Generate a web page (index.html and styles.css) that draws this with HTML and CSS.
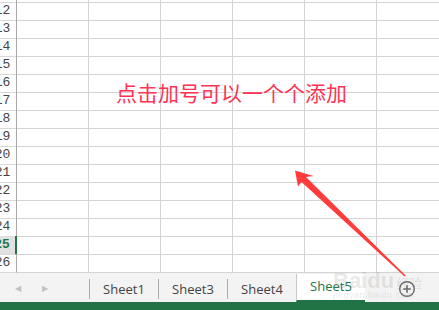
FILE: index.html
```html
<!DOCTYPE html>
<html>
<head>
    <meta charset="utf-8">
    <title>Sheet</title>
    <link rel="stylesheet" href="styles.css">
</head>
<body>
<div class="page">
    <div class="sheet">
        <div class="row"><div class="hdr">11</div><div class="cell"></div><div class="cell"></div><div class="cell"></div><div class="cell"></div><div class="cell"></div><div class="cell"></div></div>
        <div class="row"><div class="hdr">12</div><div class="cell"></div><div class="cell"></div><div class="cell"></div><div class="cell"></div><div class="cell"></div><div class="cell"></div></div>
        <div class="row"><div class="hdr">13</div><div class="cell"></div><div class="cell"></div><div class="cell"></div><div class="cell"></div><div class="cell"></div><div class="cell"></div></div>
        <div class="row"><div class="hdr">14</div><div class="cell"></div><div class="cell"></div><div class="cell"></div><div class="cell"></div><div class="cell"></div><div class="cell"></div></div>
        <div class="row"><div class="hdr">15</div><div class="cell"></div><div class="cell"></div><div class="cell"></div><div class="cell"></div><div class="cell"></div><div class="cell"></div></div>
        <div class="row"><div class="hdr">16</div><div class="cell"></div><div class="cell"></div><div class="cell"></div><div class="cell"></div><div class="cell"></div><div class="cell"></div></div>
        <div class="row"><div class="hdr">17</div><div class="cell"></div><div class="cell"></div><div class="cell"></div><div class="cell"></div><div class="cell"></div><div class="cell"></div></div>
        <div class="row"><div class="hdr">18</div><div class="cell"></div><div class="cell"></div><div class="cell"></div><div class="cell"></div><div class="cell"></div><div class="cell"></div></div>
        <div class="row"><div class="hdr">19</div><div class="cell"></div><div class="cell"></div><div class="cell"></div><div class="cell"></div><div class="cell"></div><div class="cell"></div></div>
        <div class="row"><div class="hdr">20</div><div class="cell"></div><div class="cell"></div><div class="cell"></div><div class="cell"></div><div class="cell"></div><div class="cell"></div></div>
        <div class="row"><div class="hdr">21</div><div class="cell"></div><div class="cell"></div><div class="cell"></div><div class="cell"></div><div class="cell"></div><div class="cell"></div></div>
        <div class="row"><div class="hdr">22</div><div class="cell"></div><div class="cell"></div><div class="cell"></div><div class="cell"></div><div class="cell"></div><div class="cell"></div></div>
        <div class="row"><div class="hdr">23</div><div class="cell"></div><div class="cell"></div><div class="cell"></div><div class="cell"></div><div class="cell"></div><div class="cell"></div></div>
        <div class="row"><div class="hdr">24</div><div class="cell"></div><div class="cell"></div><div class="cell"></div><div class="cell"></div><div class="cell"></div><div class="cell"></div></div>
        <div class="row"><div class="hdr hdr-active">25</div><div class="cell"></div><div class="cell"></div><div class="cell"></div><div class="cell"></div><div class="cell"></div><div class="cell"></div></div>
        <div class="row"><div class="hdr">26</div><div class="cell"></div><div class="cell"></div><div class="cell"></div><div class="cell"></div><div class="cell"></div><div class="cell"></div></div>
    </div>

    <div class="tabbar">
        <div class="nav">
            <span class="nav-arrow">&#9664;</span>
            <span class="nav-arrow">&#9654;</span>
        </div>
        <div class="tab">Sheet1</div>
        <div class="tab">Sheet3</div>
        <div class="tab">Sheet4</div>
        <div class="tab tab-active">Sheet5</div>
        <div class="add-sheet">
            <svg width="18" height="18" viewBox="0 0 18 18">
                <circle cx="9" cy="9" r="7.3" fill="none" stroke="#6a6a6a" stroke-width="1.4"/>
                <path d="M9 5.2V12.8M5.2 9H12.8" stroke="#6a6a6a" stroke-width="1.6"/>
            </svg>
        </div>
    </div>

    <div class="statusbar">就绪</div>

    <div class="note">点击加号可以一个个添加</div>

    <svg class="arrow" width="439" height="310" viewBox="0 0 439 310">
        <polygon points="295,170.5 298,186.5 301.5,182 404.6,276.6 405.6,275.6 306,177 313.5,176" fill="#ff3b3b"/>
    </svg>

    <div class="watermark">
        <span class="wm-logo">Bai<b>du</b></span><span class="wm-cn">经验</span>
        <div class="wm-url">jingyan.baidu.com</div>
    </div>
</div>
</body>
</html>
```

FILE: styles.css
```css
body {
    margin: 0;
    background: #ffffff;
    overflow: hidden;
}

.page {
    position: relative;
    width: 439px;
    height: 310px;
    overflow: hidden;
}

.sheet {
    margin-top: -16px;
    margin-left: -11px;
}

.row {
    display: grid;
    grid-template-columns: 28px repeat(6, 72px);
    height: 18px;
}

.hdr {
    box-sizing: border-box;
    border-right: 1px solid #a9a9a9;
    border-bottom: 1px solid #d8d8d8;
    font-family: "Liberation Mono", "DejaVu Sans Mono", monospace;
    font-size: 13px;
    line-height: 18px;
    color: #444444;
    text-align: center;
}

.hdr-active {
    background: #e1e1e1;
    color: #217346;
    font-weight: bold;
    border-right: 2px solid #217346;
}

.cell {
    box-sizing: border-box;
    border-right: 1px solid #d4d4d4;
    border-bottom: 1px solid #d4d4d4;
}

.tabbar {
    display: flex;
    align-items: stretch;
    height: 30px;
    background: #f3f3f3;
    font-family: "Open Sans", "Noto Sans", sans-serif;
    font-size: 13px;
}

.nav {
    display: flex;
    width: 89px;
    padding-left: 15px;
    gap: 21px;
    align-items: center;
    box-sizing: border-box;
}

.nav-arrow {
    color: #c2c2c2;
    font-size: 8px;
}

.tab {
    width: 69px;
    display: flex;
    align-items: center;
    justify-content: center;
    color: #444444;
    border-left: 1px solid #ababab;
    margin: 7px 0 3px;
    box-sizing: border-box;
}

.tab-active {
    background: #ffffff;
    color: #217346;
    margin: 2px 0 0;
    border-left: 1px solid #c8c8c8;
    border-bottom: 2px solid #217346;
    padding-bottom: 2px;
}

.add-sheet {
    display: flex;
    align-items: center;
    padding-left: 33px;
    padding-top: 3px;
}

.statusbar {
    height: 22px;
    background: #217346;
    color: #ffffff;
    font-family: "Noto Sans CJK SC", sans-serif;
    font-size: 12px;
    line-height: 22px;
    padding-top: 3px;
    margin-left: -6px;
}

.note {
    position: absolute;
    left: 116px;
    top: 80px;
    font-family: "Noto Sans CJK SC", sans-serif;
    font-size: 21px;
    line-height: 24px;
    color: #ff3355;
}

.arrow {
    position: absolute;
    left: 0;
    top: 0;
}

.watermark {
    position: absolute;
    left: 333px;
    top: 268px;
    color: rgba(140, 140, 140, 0.2);
    font-family: "Liberation Sans", sans-serif;
}

.wm-logo {
    font-size: 22px;
    font-weight: bold;
}

.wm-cn {
    font-family: "Noto Sans CJK SC", sans-serif;
    font-size: 13px;
    margin-left: 2px;
}

.wm-url {
    font-size: 9px;
    margin-top: -4px;
    letter-spacing: 0.5px;
}
```
